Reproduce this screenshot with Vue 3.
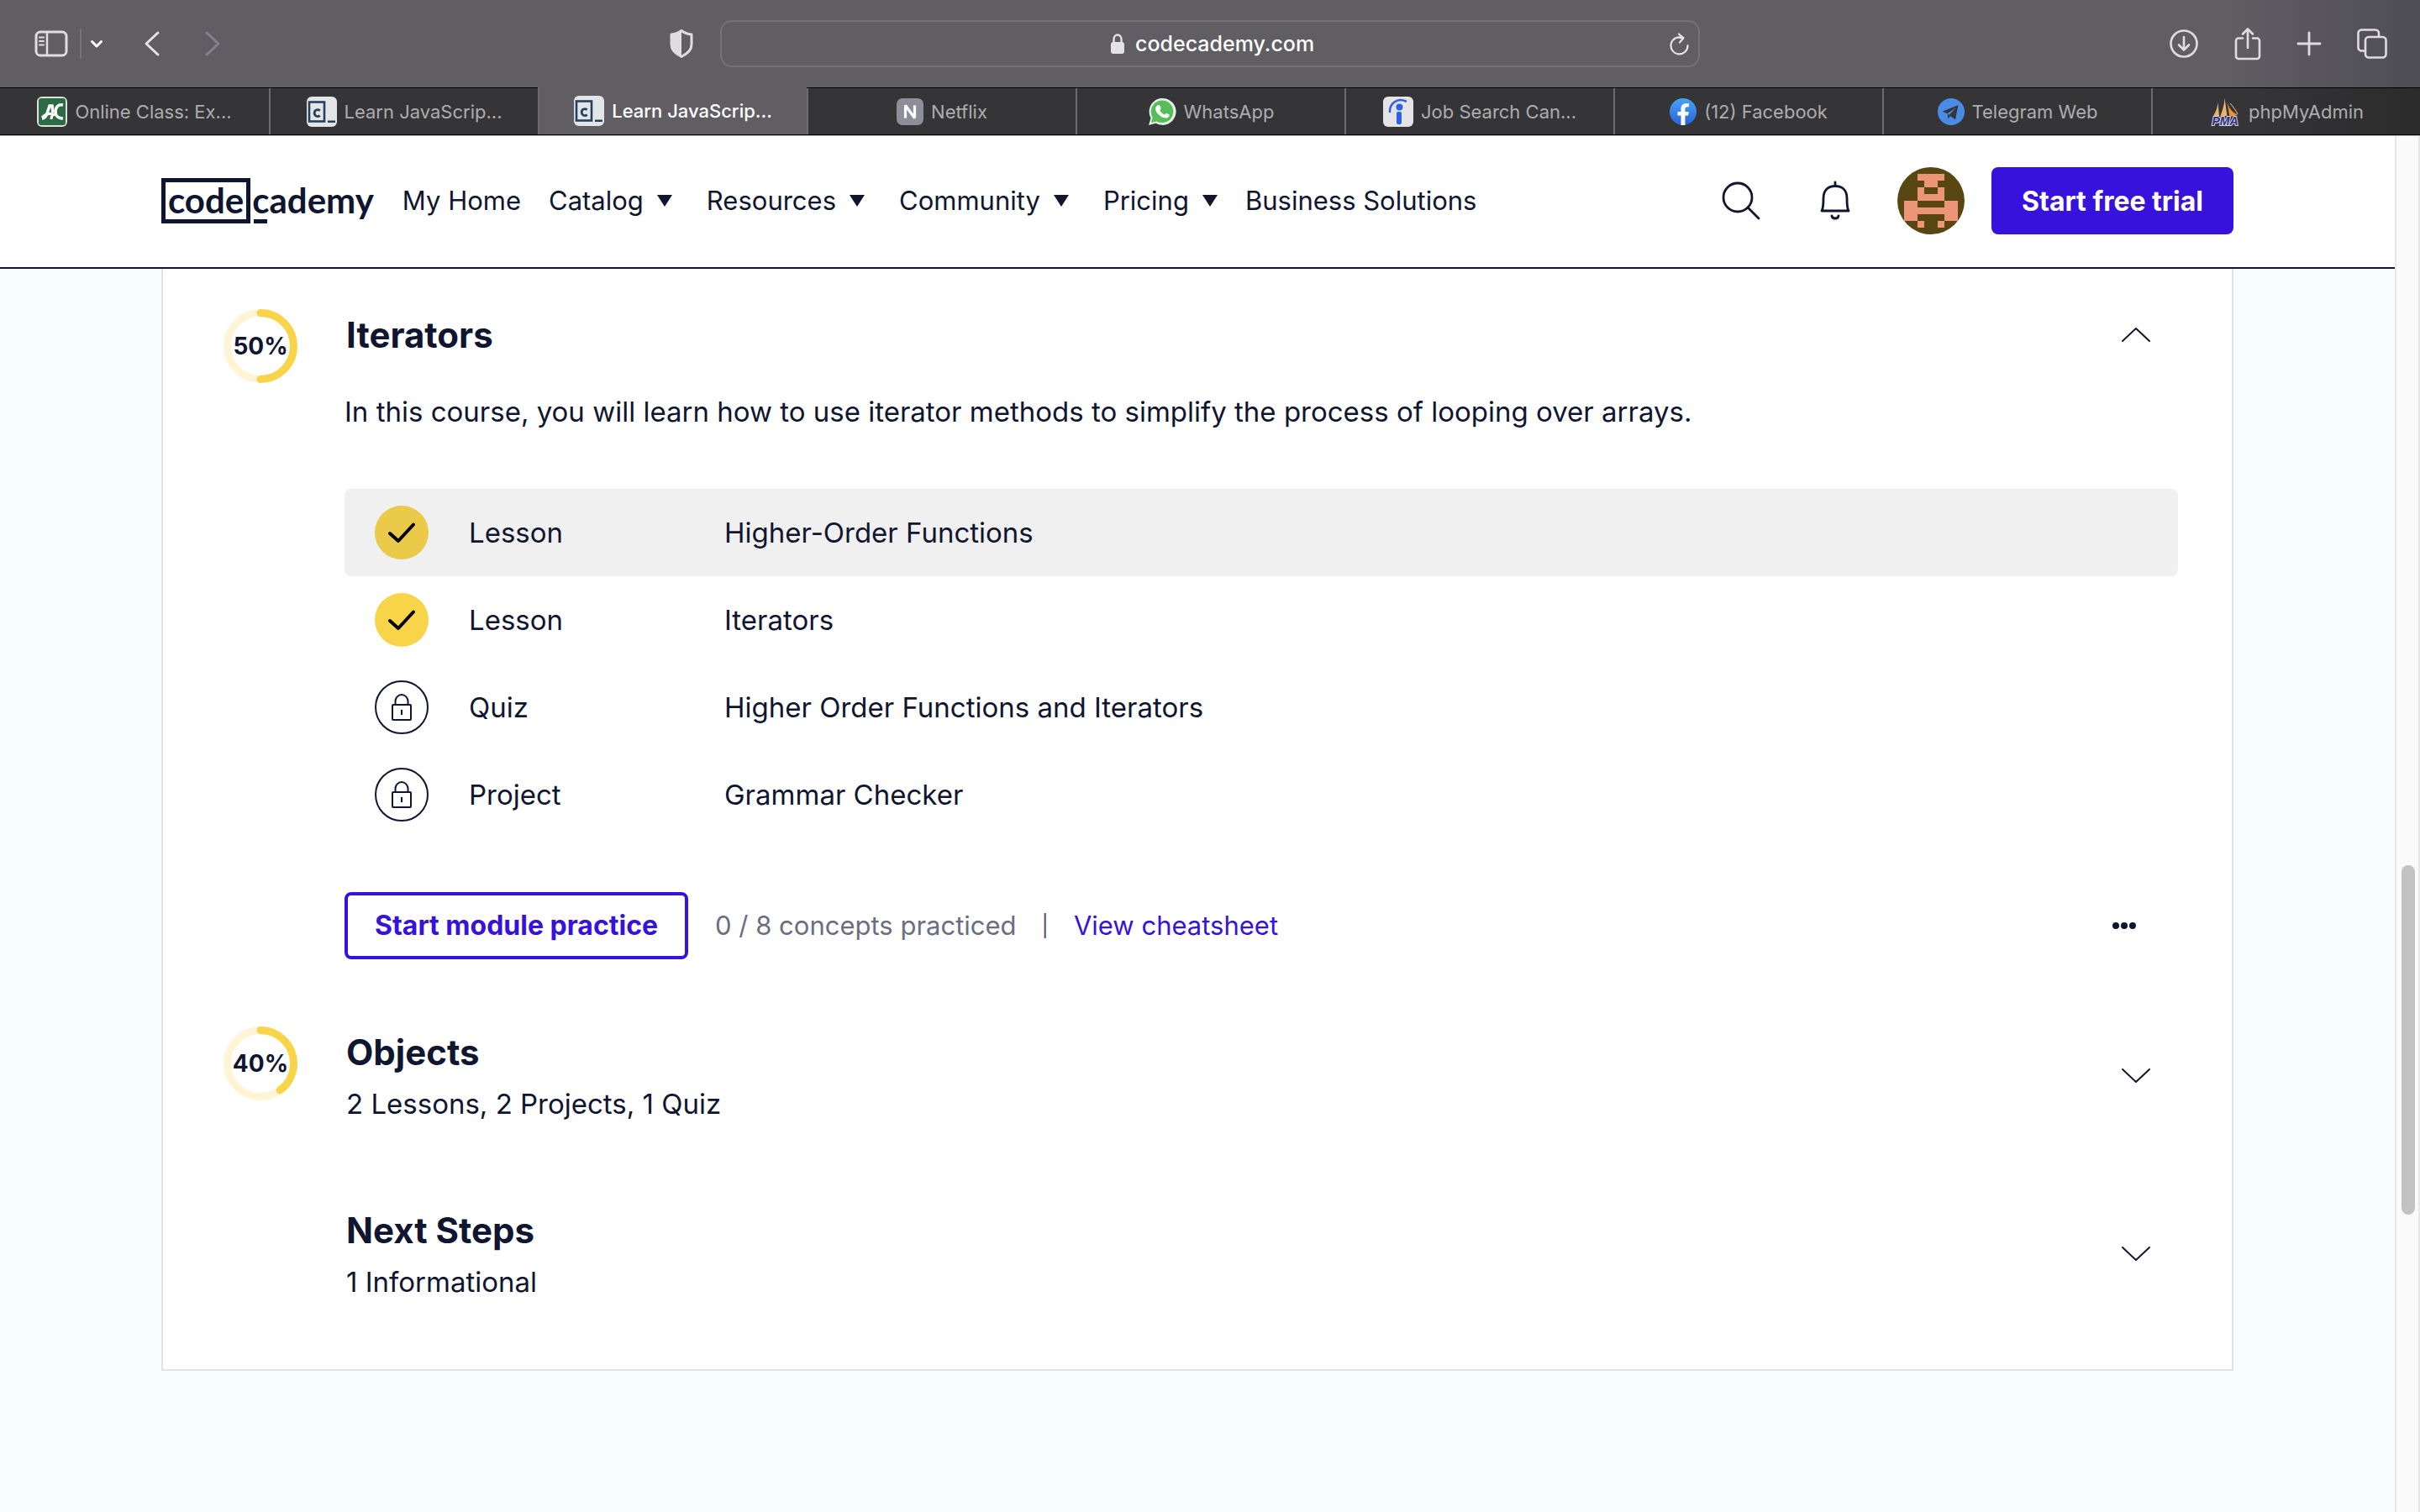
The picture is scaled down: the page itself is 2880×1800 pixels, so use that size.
<script setup>
const tabs = [
  { title: 'Online Class: Ex...', icon: 'ac' },
  { title: 'Learn JavaScrip...', icon: 'cc' },
  { title: 'Learn JavaScrip...', icon: 'cc', active: true },
  { title: 'Netflix', icon: 'netflix' },
  { title: 'WhatsApp', icon: 'whatsapp' },
  { title: 'Job Search Can...', icon: 'indeed' },
  { title: '(12) Facebook', icon: 'facebook' },
  { title: 'Telegram Web', icon: 'telegram' },
  { title: 'phpMyAdmin', icon: 'pma' },
]

const navItems = [
  { label: 'My Home', menu: false },
  { label: 'Catalog', menu: true },
  { label: 'Resources', menu: true },
  { label: 'Community', menu: true },
  { label: 'Pricing', menu: true },
  { label: 'Business Solutions', menu: false },
]

const lessons = [
  { type: 'Lesson', name: 'Higher-Order Functions', done: true, hovered: true },
  { type: 'Lesson', name: 'Iterators', done: true },
  { type: 'Quiz', name: 'Higher Order Functions and Iterators', done: false },
  { type: 'Project', name: 'Grammar Checker', done: false },
]

const collapsed = [
  { title: 'Objects', summary: '2 Lessons, 2 Projects, 1 Quiz', percent: 40 },
  { title: 'Next Steps', summary: '1 Informational', percent: null },
]
</script>

<template>
  <div class="browser">
    <div class="toolbar">
      <div class="tools tools-left">
        <button class="tool" aria-label="Sidebar">
          <svg width="40" height="34" viewBox="0 0 40 34" fill="none" stroke="#dfdde2" stroke-width="3">
            <rect x="2" y="3" width="36" height="28" rx="5" />
            <path d="M15 3v28" stroke-width="2.5" />
            <path d="M6 9.500h5M6 14h5M6 18.500h5" stroke-width="2" stroke-linecap="round" />
          </svg>
        </button>
        <span class="tool-divider"></span>
        <button class="tool" aria-label="Tab groups">
          <svg width="16" height="12" viewBox="0 0 16 12" fill="none" stroke="#fff" stroke-width="3" stroke-linecap="round" stroke-linejoin="round"><path d="M2.500 3.500 8 9l5.500-5.500" /></svg>
        </button>
        <button class="tool back" aria-label="Back">
          <svg width="20" height="32" viewBox="0 0 20 32" fill="none" stroke="#e6e4e9" stroke-width="3" stroke-linecap="round" stroke-linejoin="round"><path d="M17 3 3 16l14 13" /></svg>
        </button>
        <button class="tool forward" aria-label="Forward">
          <svg width="20" height="32" viewBox="0 0 20 32" fill="none" stroke="#858389" stroke-width="3" stroke-linecap="round" stroke-linejoin="round"><path d="m3 3 14 13L3 29" /></svg>
        </button>
        <button class="tool shield" aria-label="Privacy report">
          <svg width="28" height="34" viewBox="0 0 28 34">
            <path d="M14 1.500c3.500 2.800 7.500 4 12 4.500v12c0 7-6 11.500-12 14.500C8 29.500 2 25 2 18V6c4.500-.5 8.500-1.700 12-4.500z" fill="none" stroke="#dfdde2" stroke-width="3" stroke-linejoin="round" />
            <path d="M14 2C10.500 4.800 6.500 5.500 2 6v12c0 7 6 11.500 12 14.500z" fill="#dfdde2" />
          </svg>
        </button>
      </div>
      <form class="address" @submit.prevent>
        <svg width="18" height="26" viewBox="0 0 18 26"><rect x="1" y="11" width="16" height="14" rx="3" fill="#e4e3e6" /><path d="M4.500 12V7.500a4.500 5 0 0 1 9 0V12" fill="none" stroke="#e4e3e6" stroke-width="2.400" /></svg>
        <input class="address-input" type="text" value="codecademy.com" aria-label="Address" />
        <button class="reload" type="button" aria-label="Reload">
          <svg width="24" height="28" viewBox="0 0 24 28" fill="none" stroke="#e4e3e6" stroke-width="2.200" stroke-linecap="round" stroke-linejoin="round"><path d="M21.500 16A10 10 0 1 1 15.500 7.200L11.500 7M11 2.500l5.500 4.800L12 12.500" /></svg>
        </button>
      </form>
      <div class="tools tools-right">
        <button class="tool" aria-label="Downloads">
          <svg width="36" height="36" viewBox="0 0 36 36" fill="none" stroke="#dfdde2" stroke-width="2.600" stroke-linecap="round" stroke-linejoin="round"><circle cx="18" cy="18" r="15.500" /><path d="M18 10v15M12 19.500l6 6 6-6" /></svg>
        </button>
        <button class="tool" aria-label="Share">
          <svg width="32" height="40" viewBox="0 0 32 40" fill="none" stroke="#dfdde2" stroke-width="2.600" stroke-linecap="round" stroke-linejoin="round"><path d="M10 13.500H5a3 3 0 0 0-3 3V35a3 3 0 0 0 3 3h22a3 3 0 0 0 3-3V16.500a3 3 0 0 0-3-3h-5M16 25V3M10 8.500 16 2.500l6 6" /></svg>
        </button>
        <button class="tool" aria-label="New tab">
          <svg width="30" height="30" viewBox="0 0 30 30" fill="none" stroke="#dfdde2" stroke-width="2.800" stroke-linecap="round"><path d="M15 2v26M2 15h26" /></svg>
        </button>
        <button class="tool" aria-label="Tab overview">
          <svg width="36" height="36" viewBox="0 0 36 36" fill="none" stroke="#dfdde2" stroke-width="2.600" stroke-linejoin="round"><rect x="10" y="10" width="24.500" height="24.500" rx="4" /><path d="M10 26.500H5.500a4 4 0 0 1-4-4V5.500a4 4 0 0 1 4-4H22a4 4 0 0 1 4 4V10" /></svg>
        </button>
      </div>
    </div>

    <nav class="tabs" aria-label="Tabs">
      <a v-for="(tab, i) in tabs" :key="i" href="#" class="tab" :class="{ active: tab.active }">
        <svg v-if="tab.icon === 'ac'" width="36" height="36" viewBox="0 0 36 36">
          <rect width="36" height="36" rx="6" fill="#dfe3e0" />
          <rect x="2" y="2" width="32" height="32" rx="3" fill="#2c6b43" />
          <path d="M6 26c3 0 5-3 6-6l3-9h3l1 8" fill="none" stroke="#fff" stroke-width="3.500" />
          <path d="M6 25c5-5 10-6 16-3M17 27c0-3 1-5 3-6" fill="none" stroke="#fff" stroke-width="3" />
          <path d="M31 10c-6-1-9 3-9 8 0 5 4 8 9 8" fill="none" stroke="#fff" stroke-width="3.500" />
        </svg>
        <svg v-else-if="tab.icon === 'cc'" width="36" height="36" viewBox="0 0 36 36">
          <rect width="36" height="36" rx="6" fill="#e4e5e7" />
          <rect x="3" y="6.500" width="18" height="23" fill="none" stroke="#24425f" stroke-width="2.600" />
          <path d="M15.800 16.600c-3-2-6.600-.6-6.600 3s3.600 5 6.600 3" fill="none" stroke="#24425f" stroke-width="2.800" />
          <path d="M25 28.500h9V31h-9z" fill="#24425f" />
        </svg>
        <svg v-else-if="tab.icon === 'netflix'" width="32" height="32" viewBox="0 0 32 32">
          <rect width="32" height="32" rx="7" fill="#8e8e9b" />
          <path d="M10.500 23.500v-15l11 15v-15" fill="none" stroke="#fff" stroke-width="3.200" stroke-linejoin="bevel" />
        </svg>
        <svg v-else-if="tab.icon === 'whatsapp'" width="34" height="34" viewBox="0 0 34 34">
          <path d="M1 33 3.500 24.500A16 16 0 1 1 9.500 30.700z" fill="#e8efe8" />
          <path d="m4 30 1.700-6.300a13.300 13.300 0 1 1 4.900 4.700z" fill="#56bd58" />
          <path d="M11.500 9.500c1-.9 2.300-.8 2.800.3l1.200 2.900c.2.800-1.400 2.100-1.100 2.700 1.200 2.300 3 4 5.300 5 .8.200 1.800-2 2.600-1.700l3 1.500c.9.600-.1 3.800-3 4.200-6.500.8-14.500-7-13-12.300.4-1.200 1.300-1.900 2.200-2.600z" fill="#fff" />
        </svg>
        <svg v-else-if="tab.icon === 'indeed'" width="36" height="36" viewBox="0 0 36 36">
          <rect width="36" height="36" rx="6" fill="#e4e4e6" />
          <rect x="16" y="18" width="6" height="15" rx="2" fill="#2f5fe6" />
          <circle cx="19.500" cy="12.500" r="4" fill="#2f5fe6" />
          <path d="M8 18C8 8 17 1 27 5.500" fill="none" stroke="#2f5fe6" stroke-width="2.500" stroke-linecap="round" />
        </svg>
        <svg v-else-if="tab.icon === 'facebook'" width="32" height="32" viewBox="0 0 32 32">
          <defs><linearGradient id="fb" x2="0" y2="1"><stop stop-color="#47a3fa" /><stop offset="1" stop-color="#2a62d9" /></linearGradient></defs>
          <circle cx="16" cy="16" r="16" fill="url(#fb)" />
          <path d="M13.500 32V20.500h-4V16h4v-3.500c0-4.300 2.500-6.500 6.200-6.500l3.300.3v4h-2c-2 0-2.600 1.200-2.600 2.500V16h4.400l-.8 4.500h-3.600V32z" fill="#fff" />
        </svg>
        <svg v-else-if="tab.icon === 'telegram'" width="32" height="32" viewBox="0 0 32 32">
          <circle cx="16" cy="16" r="16" fill="#4a8be6" />
          <path d="M24.500 8 5.500 15.800l6 2.500L22 11l-8.500 9 7.500 5.500z" fill="#353537" />
          <path d="M12 18.500v6l3-3.200" fill="#353537" />
        </svg>
        <svg v-else width="38" height="44" viewBox="-2 -5 38 44">
          <path d="M3 22C6 17 8 12 8.500 6L10 22zM11.500 22C14 15 16 9 16.500 1l3 21z" fill="#eab36c" />
          <path d="M19 3c1 7 5 14 13 18l-9.500 2z" fill="#ee9433" />
          <path d="M23 7c4 4 7 9 9 13" stroke="#f3c68d" fill="none" />
          <text x="17" y="33" text-anchor="middle" class="pma-text">PMA</text>
        </svg>
        <span>{{ tab.title }}</span>
      </a>
    </nav>

    <div class="viewport">
      <div class="page">
        <header class="site-header">
          <a class="logo" href="#" aria-label="Codecademy">
            <span class="logo-code">code</span><span class="logo-cademy">cademy</span>
          </a>
          <nav class="site-nav" aria-label="Main">
            <template v-for="item in navItems" :key="item.label">
              <button v-if="item.menu" class="nav-item menu">
                {{ item.label }}
                <svg width="18" height="14" viewBox="0 0 18 14"><path d="M0 0h18L9 14z" fill="#10162f" /></svg>
              </button>
              <a v-else class="nav-item" href="#">{{ item.label }}</a>
            </template>
          </nav>
          <div class="account">
            <div class="account-icons">
              <button aria-label="Search">
                <svg width="48" height="48" viewBox="0 0 48 48" fill="none" stroke="#10162f" stroke-width="2.800" stroke-linecap="round"><circle cx="20" cy="20" r="17" /><path d="m32 32 13 13" /></svg>
              </button>
              <button aria-label="Notifications">
                <svg width="48" height="48" viewBox="0 0 48 48" fill="none" stroke="#10162f" stroke-width="2.800" stroke-linecap="round" stroke-linejoin="round"><path d="M24 2v4M8 36c2-3 2-9 2-15C10 11 16 6.500 24 6.500S38 11 38 21c0 6 0 12 2 15zM20 42c.5 4 7.500 4 8 0" /></svg>
              </button>
            </div>
            <a class="avatar" href="#" aria-label="Profile">
              <svg width="80" height="80" viewBox="0 0 80 80" shape-rendering="crispEdges">
                <path fill="#ec9578" d="M24 8h32v8H24zM32 16h16v8H32zM24 24h8v8h-8zM48 24h8v8h-8zM24 32h32v8H24zM8 40h16v8H8zM56 40h16v8H56zM8 48h64v8H8zM8 56h16v8H8zM56 56h16v8H56zM24 64h8v8h-8zM48 64h8v8h-8z" />
              </svg>
            </a>
            <button class="trial">Start free trial</button>
          </div>
        </header>

        <main class="content">
          <div class="card">
            <section class="module">
              <div class="ring">
                <svg width="88" height="88" viewBox="0 0 88 88" fill="none" stroke-width="9">
                  <circle cx="44" cy="44" r="39.500" stroke="#fff5d6" />
                  <circle cx="44" cy="44" r="39.500" stroke="#f8d448" pathLength="100" stroke-dasharray="50 100" stroke-linecap="round" transform="rotate(-90 44 44)" />
                </svg>
                <span class="ring-label">50%</span>
              </div>
              <div class="module-body">
                <button class="module-toggle" aria-expanded="true">
                  <span class="module-title">Iterators</span>
                  <svg width="34" height="20" viewBox="0 0 34 20" fill="none" stroke="#10162f" stroke-width="2" stroke-linecap="round" stroke-linejoin="round"><path d="m1 17 16-15 16 15" /></svg>
                </button>
                <p class="description">In this course, you will learn how to use iterator methods to simplify the process of looping over arrays.</p>
                <ul class="lessons">
                  <li v-for="lesson in lessons" :key="lesson.name">
                    <a href="#" class="lesson" :class="{ hovered: lesson.hovered }">
                      <svg v-if="lesson.done" width="64" height="64" viewBox="0 0 64 64" fill="none">
                        <circle cx="32" cy="32" r="32" :fill="lesson.hovered ? '#eaca48' : '#f8d448'" />
                        <path d="m18 33 10 9 18-19.500" stroke="#000" stroke-width="4" stroke-linecap="round" stroke-linejoin="round" />
                      </svg>
                      <svg v-else width="64" height="64" viewBox="0 0 64 64" fill="none" stroke="#10162f" stroke-width="2">
                        <circle cx="32" cy="32" r="31" />
                        <rect x="21" y="29" width="22" height="18" rx="1" />
                        <path d="M24.500 29v-4a7.500 8 0 0 1 15 0v4M32 35v6" />
                      </svg>
                      <span>{{ lesson.type }}</span>
                      <span>{{ lesson.name }}</span>
                    </a>
                  </li>
                </ul>
                <div class="practice">
                  <button class="practice-button">Start module practice</button>
                  <span class="practice-count">0 / 8 concepts practiced</span>
                  <span class="practice-bar">|</span>
                  <a href="#" class="cheatsheet">View cheatsheet</a>
                  <button class="more" aria-label="More options">
                    <svg width="28" height="8" viewBox="0 0 28 8" fill="#10162f"><circle cx="4" cy="4" r="4" /><circle cx="14" cy="4" r="4" /><circle cx="24" cy="4" r="4" /></svg>
                  </button>
                </div>
              </div>
            </section>

            <section v-for="mod in collapsed" :key="mod.title" class="module collapsed">
              <div class="ring">
                <template v-if="mod.percent">
                  <svg width="88" height="88" viewBox="0 0 88 88" fill="none" stroke-width="9">
                    <circle cx="44" cy="44" r="39.500" stroke="#fff5d6" />
                    <circle cx="44" cy="44" r="39.500" stroke="#f8d448" pathLength="100" :stroke-dasharray="`${mod.percent} 100`" stroke-linecap="round" transform="rotate(-90 44 44)" />
                  </svg>
                  <span class="ring-label">{{ mod.percent }}%</span>
                </template>
              </div>
              <button class="module-toggle" aria-expanded="false">
                <span class="module-text">
                  <span class="module-title">{{ mod.title }}</span>
                  <span class="module-summary">{{ mod.summary }}</span>
                </span>
                <svg width="34" height="20" viewBox="0 0 34 20" fill="none" stroke="#10162f" stroke-width="2" stroke-linecap="round" stroke-linejoin="round"><path d="m1 3 16 15 16-15" /></svg>
              </button>
            </section>
          </div>
        </main>
      </div>
      <div class="scrollbar"><div class="thumb"></div></div>
    </div>
  </div>
</template>

<style>
html,
body {
  margin: 0;
}
</style>

<style scoped>
.browser {
  display: flex;
  flex-direction: column;
  min-height: 100vh;
  box-sizing: border-box;
  font-family: Inter, "Liberation Sans", sans-serif;
  color: #10162f;
}
.browser * {
  box-sizing: border-box;
}
svg {
  display: block;
  flex: none;
}
a {
  color: inherit;
  text-decoration: none;
}
button {
  margin: 0;
  padding: 0;
  border: 0;
  background: none;
  color: inherit;
  font: inherit;
  text-align: left;
  cursor: pointer;
}

/* Browser toolbar */
.toolbar {
  display: grid;
  grid-template-columns: minmax(0, 1fr) minmax(0, 1166px) minmax(0, 1fr);
  align-items: center;
  height: 104px;
  background: linear-gradient(90deg, #605e63 92%, #4e4d53);
}
.tools {
  display: flex;
  align-items: center;
}
.tools-left {
  padding: 0 32px 0 41px;
}
.tool-divider {
  width: 2px;
  height: 36px;
  margin: 0 10px 0 14px;
  background: #737277;
}
.back {
  margin-left: 48px;
}
.forward {
  margin-left: 52px;
}
.shield {
  margin-left: auto;
}
.tools-right {
  justify-content: flex-end;
  gap: 42px;
  padding-right: 39px;
}
.address {
  display: flex;
  align-items: center;
  justify-content: center;
  gap: 12px;
  position: relative;
  height: 56px;
  padding-left: 24px;
  border: 2px solid #737277;
  border-radius: 14px;
}
.address-input {
  width: 232px;
  height: 48px;
  padding: 0;
  border: 0;
  outline: 0;
  background: none;
  color: #fff;
  font: 500 25px/40px Inter, "Liberation Sans", sans-serif;
}
.reload {
  position: absolute;
  right: 10px;
}

/* Browser tabs */
.tabs {
  display: grid;
  grid-auto-columns: minmax(0, 1fr);
  grid-auto-flow: column;
  height: 58px;
  border-bottom: 1px solid #b5b5b5;
  background: #000;
}
.tab {
  display: flex;
  align-items: center;
  justify-content: center;
  gap: 9px;
  margin: 1px 0;
  border-left: 2px solid #6b6b6e;
  background: #353537;
  color: #adadaf;
  font-size: 22px;
  white-space: nowrap;
}
.tab:first-child {
  border-left: 0;
}
.tab:last-child {
  background: linear-gradient(90deg, #353537 40%, #2b2b2c);
}
.tab.active {
  margin-top: 0;
  background: #605e63;
  color: #fff;
  font-weight: 500;
}
.pma-text {
  font: italic 700 14px "Liberation Sans", sans-serif;
  fill: #2f2f78;
  stroke: #d8d8ea;
  stroke-width: 2px;
  paint-order: stroke;
}

/* Page */
.viewport {
  display: flex;
  flex: 1;
}
.page {
  display: flex;
  flex: 1;
  flex-direction: column;
  min-width: 0;
  background: #f7fcff;
}
.scrollbar {
  width: 30px;
  padding: 868px 4px 0 6px;
  border: solid #e7e7e7;
  border-width: 0 2px;
  background: #fafafa;
}
.thumb {
  height: 416px;
  border-radius: 8px;
  background: #c2c2c2;
}

/* Site header */
.site-header {
  display: flex;
  align-items: center;
  height: 158px;
  padding: 0 192px 2px;
  border-bottom: 2px solid #10162f;
  background: #fff;
}
.logo {
  display: flex;
  gap: 2px;
  height: 54px;
  font: 700 42px/42px Lato, "Liberation Sans", sans-serif;
}
.logo-code {
  padding: 0 3px;
  border: 5px solid #10162f;
}
.logo-cademy {
  padding: 5px 0 0;
  background: linear-gradient(#10162f, #10162f) 2px 100% / 16px 5px no-repeat;
}
.site-nav {
  display: flex;
  gap: 33px;
  margin-left: 34px;
  font-size: 31px;
  line-height: 40px;
  white-space: nowrap;
}
.nav-item {
  display: flex;
  align-items: center;
  gap: 16px;
}
.menu + .menu {
  margin-left: 8px;
}
.account {
  display: flex;
  align-items: center;
  margin-left: auto;
}
.account-icons {
  display: flex;
  gap: 64px;
  margin-right: 50px;
}
.avatar {
  flex: none;
  width: 80px;
  height: 80px;
  overflow: hidden;
  border-radius: 50%;
  background: #584712;
}
.trial {
  height: 80px;
  margin-left: 32px;
  padding: 0 36px;
  border-radius: 8px;
  background: #3612dc;
  color: #fff;
  font-size: 32px;
  font-weight: 700;
  white-space: nowrap;
}

/* Course card */
.content {
  padding: 0 192px 168px;
}
.card {
  padding: 48px 64px 64px 72px;
  border: 2px solid #e0e2e7;
  border-top: 0;
  background: #fff;
  font-size: 33px;
  line-height: 48px;
}
.module {
  display: grid;
  grid-template-columns: 88px minmax(0, 1fr);
  align-items: start;
  column-gap: 56px;
}
.module + .module {
  margin-top: 80px;
}
.collapsed {
  min-height: 132px;
}
.ring {
  display: grid;
  height: 88px;
  place-items: center;
}
.ring > * {
  grid-area: 1 / 1;
}
.ring-label {
  font-size: 28px;
  font-weight: 700;
}
.module-toggle {
  display: flex;
  align-items: center;
  justify-content: space-between;
  width: 100%;
  padding-right: 33px;
}
.module-text {
  display: flex;
  flex-direction: column;
  gap: 6px;
}
.module-title {
  padding-left: 2px;
  font-size: 42px;
  font-weight: 700;
  line-height: 62px;
}
.module-summary {
  padding-left: 2px;
}
.description {
  margin: 36px 0 68px;
}
.lessons {
  margin: 0;
  padding: 0;
  list-style: none;
}
.lesson {
  display: grid;
  grid-template-columns: 112px 304px minmax(0, 1fr);
  align-items: center;
  height: 104px;
  padding-left: 36px;
  border-radius: 8px;
}
.lesson.hovered {
  background: #f0f0f0;
}
.practice {
  display: flex;
  align-items: center;
  margin-top: 64px;
  padding-right: 50px;
  font-size: 31px;
}
.practice-button {
  height: 80px;
  padding: 0 32px;
  border: 4px solid #3612dc;
  border-radius: 8px;
  color: #3612dc;
  font-size: 32px;
  font-weight: 700;
}
.practice-count {
  margin-left: 32px;
  color: #6a6e7f;
}
.practice-bar {
  margin: 0 30px;
  color: #4b5064;
  font-size: 25px;
}
.cheatsheet {
  color: #3612dc;
}
.more {
  margin-left: auto;
}
</style>
